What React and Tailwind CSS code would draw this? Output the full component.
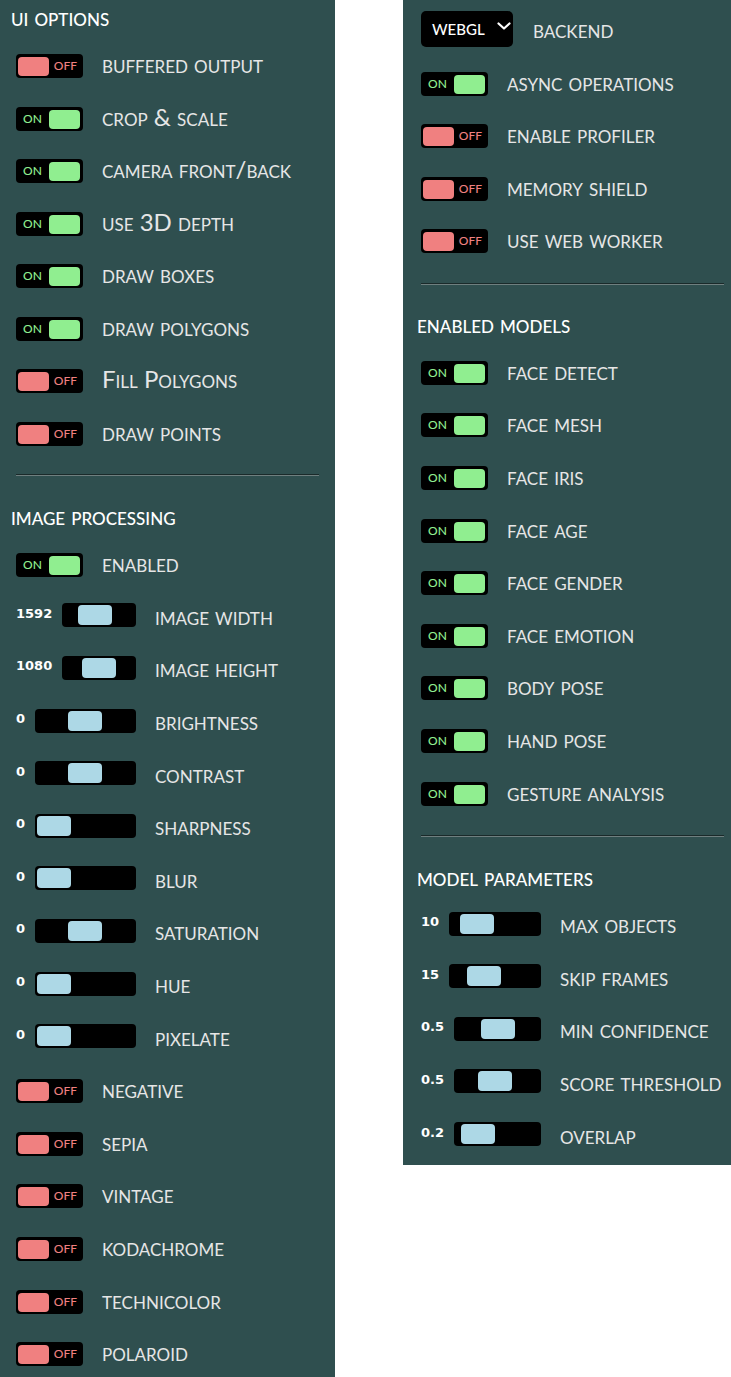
import React from "react";

const uiOptions = [
  { label: "buffered output", on: false },
  { label: "crop & scale", on: true },
  { label: "camera front/back", on: true },
  { label: "use 3D depth", on: true },
  { label: "draw boxes", on: true },
  { label: "draw polygons", on: true },
  { label: "Fill Polygons", on: false },
  { label: "draw points", on: false },
];

const imageProcessing = [
  { label: "enabled", on: true },
  { label: "image width", value: "1592", pos: 0.38 },
  { label: "image height", value: "1080", pos: 0.5 },
  { label: "brightness", value: "0", pos: 0.49 },
  { label: "contrast", value: "0", pos: 0.49 },
  { label: "sharpness", value: "0", pos: 0 },
  { label: "blur", value: "0", pos: 0 },
  { label: "saturation", value: "0", pos: 0.49 },
  { label: "hue", value: "0", pos: 0 },
  { label: "pixelate", value: "0", pos: 0 },
  { label: "negative", on: false },
  { label: "sepia", on: false },
  { label: "vintage", on: false },
  { label: "kodachrome", on: false },
  { label: "technicolor", on: false },
  { label: "polaroid", on: false },
];

const backendOptions = [
  { label: "async operations", on: true },
  { label: "enable profiler", on: false },
  { label: "memory shield", on: false },
  { label: "use web worker", on: false },
];

const enabledModels = [
  "face detect",
  "face mesh",
  "face iris",
  "face age",
  "face gender",
  "face emotion",
  "body pose",
  "hand pose",
  "gesture analysis",
].map((label) => ({ label, on: true }));

const modelParameters = [
  { label: "max objects", value: "10", pos: 0.17 },
  { label: "skip frames", value: "15", pos: 0.3 },
  { label: "min confidence", value: "0.5", pos: 0.5 },
  { label: "score threshold", value: "0.5", pos: 0.44 },
  { label: "overlap", value: "0.2", pos: 0.1 },
];

const Label = ({ children }) => (
  <span className="mb-[4px] whitespace-nowrap font-['Lato',sans-serif] text-[24px] leading-none text-[#e6e6e6] [font-variant:small-caps]">
    {children}
  </span>
);

const Title = ({ children }) => (
  <div className="flex h-[40px] items-center whitespace-nowrap pb-[6px] font-['Lato',sans-serif] text-[24px] font-medium leading-none text-white [font-variant:small-caps]">
    {children}
  </div>
);

const Toggle = ({ on }) => (
  <div className="relative mr-[19px] h-[24px] w-[67px] shrink-0 rounded-[4px] bg-black font-['Lato',sans-serif] text-[12px] font-medium leading-[24px]">
    {on ? (
      <span className="absolute left-[7px] top-0 text-[#90ee90]">ON</span>
    ) : (
      <span className="absolute right-[6px] top-0 text-[#f08080]">OFF</span>
    )}
    <div
      className={
        on
          ? "absolute left-[33px] top-[3px] h-[19px] w-[31px] rounded-[4px] bg-[#90ee90]"
          : "absolute left-[2px] top-[3px] h-[19px] w-[31px] rounded-[4px] bg-[#f08080]"
      }
    />
  </div>
);

const Range = ({ value, pos }) => (
  <div className="mb-[5px] mr-[19px] flex w-[120px] shrink-0 items-center gap-[10px]">
    <span className="mb-[4px] font-['DejaVu_Sans',sans-serif] text-[13px] font-bold leading-none text-white">
      {value}
    </span>
    <div className="relative h-[24px] flex-1 rounded-[4px] bg-black">
      <div
        className="absolute top-[2px] h-[20px] w-[34px] rounded-[4px] bg-[#add8e6]"
        style={{ left: `calc(2px + (100% - 38px) * ${pos})` }}
      />
    </div>
  </div>
);

const Item = ({ item, tall }) => (
  <div className={tall ? "flex h-[52.6px] items-center" : "flex h-[52.5px] items-center"}>
    {item.value !== undefined ? <Range value={item.value} pos={item.pos} /> : <Toggle on={item.on} />}
    <Label>{item.label}</Label>
  </div>
);

const Divider = ({ className }) => (
  <div className={`h-[2px] w-[303px] border-t border-b border-t-[#1a2a2a] border-b-[#6f7f7f] ${className}`} />
);

export default function App() {
  return (
    <div className="flex min-h-[1377px] w-[731px] items-start overflow-hidden bg-white">
      {/* left menu */}
      <div className="h-[1377px] w-[335px] shrink-0 overflow-hidden bg-[#2f4f4f]">
        <div className="pl-[11px]">
          <Title>ui options</Title>
        </div>
        <div className="pl-[16px]">
          {uiOptions.map((item) => (
            <Item key={item.label} item={item} />
          ))}
          <Divider className="mt-[14px]" />
        </div>
        <div className="mt-[23px] pl-[11px]">
          <Title>image processing</Title>
        </div>
        <div className="pl-[16px]">
          {imageProcessing.map((item) => (
            <Item key={item.label} item={item} tall />
          ))}
        </div>
      </div>

      {/* right menu */}
      <div className="ml-[68px] w-[328px] shrink-0 bg-[#2f4f4f] pb-[2px] pt-[5px]">
        <div className="pl-[18px]">
          <div className="flex h-[52.5px] items-center">
            <div className="mb-[4px] mr-[20px] flex h-[36px] w-[92px] shrink-0 items-center rounded-[5px] bg-black pl-[11px]">
              <span className="font-['Lato',sans-serif] text-[15px] font-medium leading-none text-white">WEBGL</span>
              <svg className="mb-[6px] ml-[12px]" width="14" height="8" viewBox="0 0 14 8" fill="none">
                <polyline points="1.5,1.5 7,6.5 12.5,1.5" stroke="white" strokeWidth="2.2" strokeLinecap="round" strokeLinejoin="round" />
              </svg>
            </div>
            <Label>backend</Label>
          </div>
          {backendOptions.map((item) => (
            <Item key={item.label} item={item} />
          ))}
          <Divider className="mt-[15px]" />
        </div>
        <div className="mt-[22px] pl-[14px]">
          <Title>enabled models</Title>
        </div>
        <div className="pl-[18px]">
          {enabledModels.map((item) => (
            <Item key={item.label} item={item} tall />
          ))}
          <Divider className="mt-[15px]" />
        </div>
        <div className="mt-[23px] pl-[14px]">
          <Title>model parameters</Title>
        </div>
        <div className="pl-[18px]">
          {modelParameters.map((item) => (
            <Item key={item.label} item={item} tall />
          ))}
        </div>
      </div>
    </div>
  );
}
